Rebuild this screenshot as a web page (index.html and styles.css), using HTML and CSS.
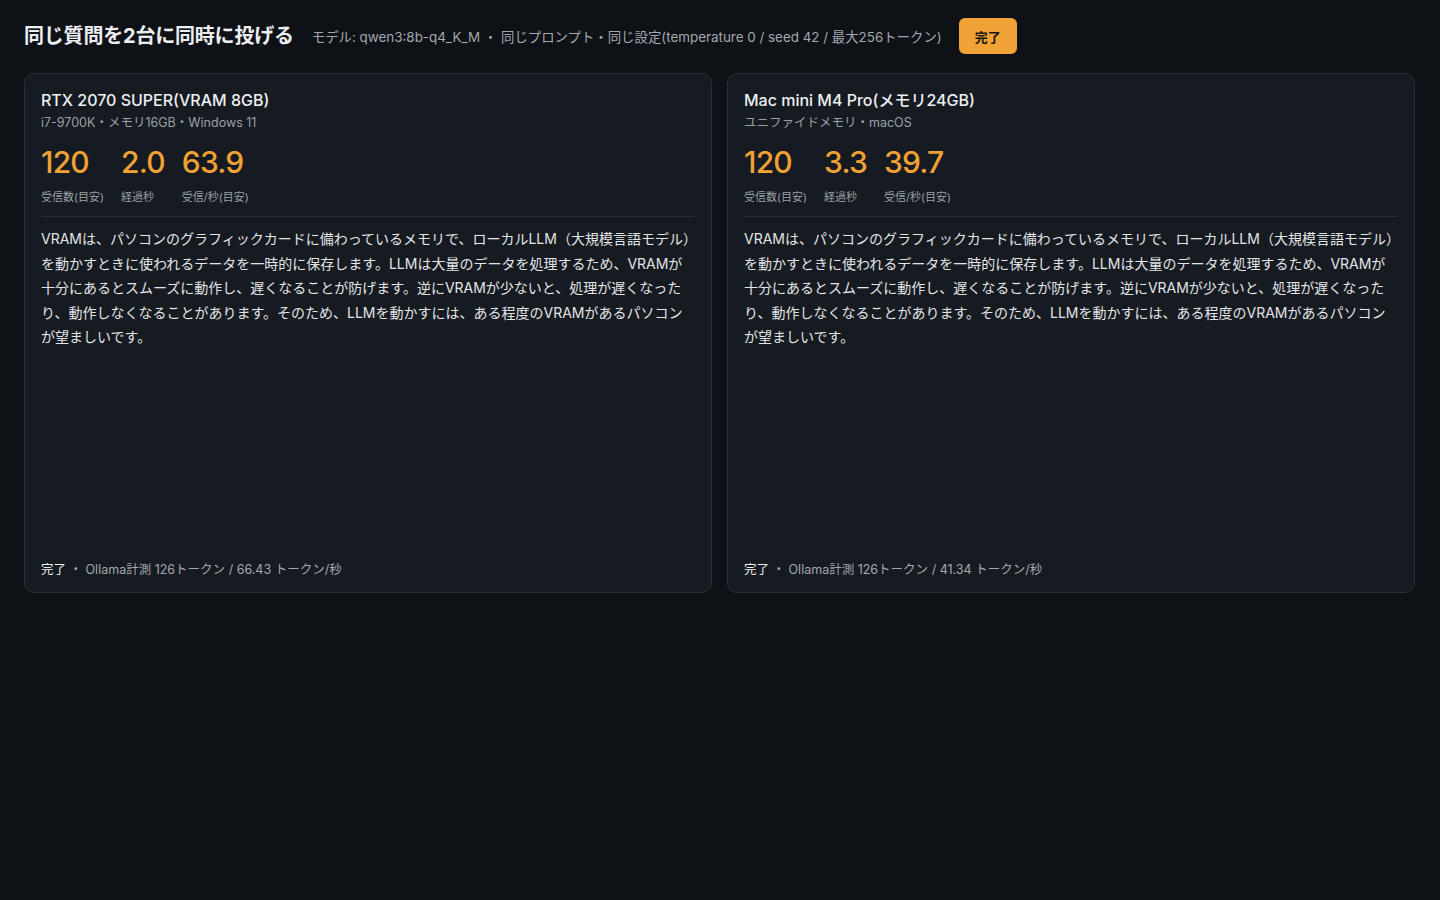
FILE: index.html
```html
<!DOCTYPE html>
<html lang="ja">
<head>
    <meta charset="UTF-8">
    <meta name="viewport" content="width=device-width, initial-scale=1.0">
    <title>同じ質問を2台に同時に投げる</title>
    <link rel="stylesheet" href="styles.css">
</head>
<body>

<header class="topbar">
    <h1>同じ質問を2台に同時に投げる</h1>
    <span class="meta">モデル: qwen3:8b-q4_K_M ・ 同じプロンプト・同じ設定(temperature 0 / seed 42 / 最大256トークン)</span>
    <button class="run-button">完了</button>
</header>

<main class="compare">
    <!-- Machine A -->
    <section class="card">
        <h2>RTX 2070 SUPER(VRAM 8GB)</h2>
        <div class="spec">i7-9700K・メモリ16GB・Windows 11</div>
        <div class="stats">
            <div class="stat"><div class="num">120</div><div class="label">受信数(目安)</div></div>
            <div class="stat"><div class="num">2.0</div><div class="label">経過秒</div></div>
            <div class="stat"><div class="num">63.9</div><div class="label">受信/秒(目安)</div></div>
        </div>
        <p class="answer">VRAMは、パソコンのグラフィックカードに備わっているメモリで、ローカルLLM（大規模言語モデル）を動かすときに使われるデータを一時的に保存します。LLMは大量のデータを処理するため、VRAMが十分にあるとスムーズに動作し、遅くなることが防げます。逆にVRAMが少ないと、処理が遅くなったり、動作しなくなることがあります。そのため、LLMを動かすには、ある程度のVRAMがあるパソコンが望ましいです。</p>
        <div class="status"><span class="done">完了</span> ・ Ollama計測 126トークン / 66.43 トークン/秒</div>
    </section>

    <!-- Machine B -->
    <section class="card">
        <h2>Mac mini M4 Pro(メモリ24GB)</h2>
        <div class="spec">ユニファイドメモリ・macOS</div>
        <div class="stats">
            <div class="stat"><div class="num">120</div><div class="label">受信数(目安)</div></div>
            <div class="stat"><div class="num">3.3</div><div class="label">経過秒</div></div>
            <div class="stat"><div class="num">39.7</div><div class="label">受信/秒(目安)</div></div>
        </div>
        <p class="answer">VRAMは、パソコンのグラフィックカードに備わっているメモリで、ローカルLLM（大規模言語モデル）を動かすときに使われるデータを一時的に保存します。LLMは大量のデータを処理するため、VRAMが十分にあるとスムーズに動作し、遅くなることが防げます。逆にVRAMが少ないと、処理が遅くなったり、動作しなくなることがあります。そのため、LLMを動かすには、ある程度のVRAMがあるパソコンが望ましいです。</p>
        <div class="status"><span class="done">完了</span> ・ Ollama計測 126トークン / 41.34 トークン/秒</div>
    </section>
</main>

</body>
</html>
```

FILE: styles.css
```css
body {
    font-family: Inter, "Noto Sans CJK JP", sans-serif;
    background-color: #0e1116;
    color: #e6e8eb;
    margin: 0;
    padding: 0;
}
.topbar {
    display: flex;
    align-items: center;
    padding: 18px 24px 0;
    height: 36px;
}
.topbar h1 {
    margin: -3px 0 0;
    font-size: 20px;
    font-weight: 700;
    color: #eceef1;
    letter-spacing: -0.2px;
}
.meta {
    margin-left: 18px;
    font-size: 13.4px;
    color: #a3a8b0;
}
.run-button {
    margin-left: 17px;
    width: 58px;
    height: 36px;
    border: none;
    border-radius: 6px;
    background-color: #f0a235;
    color: #1b1610;
    font-family: inherit;
    font-size: 13px;
    font-weight: 700;
}
.compare {
    display: grid;
    grid-template-columns: 1fr 1fr;
    gap: 15px;
    padding: 19px 25px 19px 24px;
}
.card {
    box-sizing: border-box;
    height: 520px;
    display: flex;
    flex-direction: column;
    background-color: #161a21;
    border: 1px solid #2a2f37;
    border-radius: 10px;
    padding: 15px 16px 14px;
}
.card h2 {
    margin: 0;
    font-size: 16px;
    font-weight: 500;
    line-height: 22px;
    color: #eef0f3;
}
.spec {
    font-size: 12.5px;
    color: #9aa0a8;
    margin-top: 3px;
    line-height: 18px;
}
.stats {
    display: flex;
    gap: 17px;
    margin-top: 12px;
    padding-bottom: 12px;
    border-bottom: 1px solid #2a2f37;
}
.num {
    font-size: 30px;
    font-weight: 500;
    line-height: 36px;
    color: #f0a235;
    letter-spacing: -0.8px;
}
.label {
    font-size: 11px;
    color: #9aa0a8;
    margin-top: 8px;
}
.answer {
    margin: 10px 0 0;
    font-size: 14px;
    line-height: 24.5px;
    color: #e3e5e8;
}
.status {
    margin-top: auto;
    font-size: 12.5px;
    color: #a3a8b0;
}
.done {
    color: #eceef1;
}
```
